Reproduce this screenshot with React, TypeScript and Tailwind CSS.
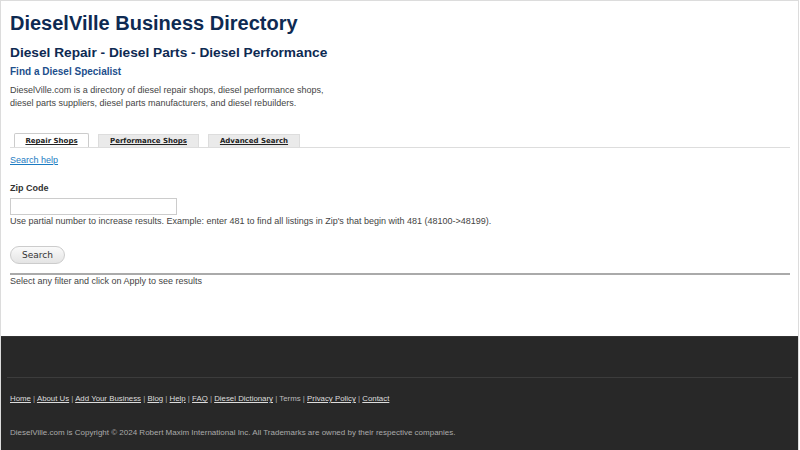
export default function App() {
	const links = [
		"Home",
		"About Us",
		"Add Your Business",
		"Blog",
		"Help",
		"FAQ",
		"Diesel Dictionary",
		"Terms",
		"Privacy Policy",
		"Contact",
	];

	const tab = "h-[13px] text-center text-[7px] leading-[13px] font-bold underline text-[#222] font-['DejaVu_Sans',Verdana,sans-serif] border border-b-0";

	return (
		<div className="w-[800px] h-[450px] overflow-hidden bg-white font-['Liberation_Sans',Arial,sans-serif]">
			<div className="w-[799px] h-full flex flex-col border-l border-t border-r border-[#dcdcdc]">
				{/* main */}
				<main className="h-[335px] px-[9px] pr-[8px]">
					<h1 className="mt-[10px] text-[20px] leading-[24px] font-bold text-[#0e2a52]">
						DieselVille Business Directory
					</h1>
					<h2 className="mt-[9px] text-[13.7px] leading-[17px] font-bold text-[#0e2a52]">
						Diesel Repair - Diesel Parts - Diesel Performance
					</h2>
					<h3 className="mt-[4px] text-[10px] leading-[13px] font-bold text-[#1d4f8c]">
						Find a Diesel Specialist
					</h3>
					<p className="mt-[6px] text-[9px] leading-[13px] text-[#444]">
						DieselVille.com is a directory of diesel repair shops, diesel performance shops,
						<br />
						diesel parts suppliers, diesel parts manufacturers, and diesel rebuilders.
					</p>

					{/* tabs */}
					<div className="mt-[24px] flex items-end gap-[9px] pl-[4px] border-b border-[#ddd] h-[14px]">
						<span className={`${tab} w-[75px] h-[14px] leading-[14px] bg-white border-[#ccc] rounded-t-[2px]`}>
							Repair Shops
						</span>
						<span className={`${tab} w-[101px] bg-[#eaeaea] border-[#ddd]`}>Performance Shops</span>
						<span className={`${tab} w-[92px] bg-[#eaeaea] border-[#ddd]`}>Advanced Search</span>
					</div>

					<a href="#" className="block w-fit mt-[6px] text-[9px] leading-[13px] text-[#1b7bc2] underline">
						Search help
					</a>

					<div className="mt-[15px] text-[9px] leading-[13px] font-bold text-[#333]">Zip Code</div>
					<input
						type="text"
						className="block mt-[3px] w-[167px] h-[17px] border border-[#ccc] bg-white"
					/>
					<p className="text-[9px] leading-[13px] text-[#444]">
						Use partial number to increase results. Example: enter 481 to find all listings in Zip's that begin
						with 481 (48100-&gt;48199).
					</p>

					<button className="block mt-[18px] w-[55px] h-[18px] rounded-full border border-[#ccc] bg-gradient-to-b from-[#fafafa] to-[#e4e4e4] text-[9px] leading-[16px] text-[#333] font-['DejaVu_Sans',Verdana,sans-serif]">
						Search
					</button>

					<div className="mt-[9px] h-[2px] bg-[#aaa]" />
					<p className="text-[9px] leading-[13px] text-[#444]">
						Select any filter and click on Apply to see results
					</p>
				</main>

				{/* footer */}
				<footer className="flex-1 bg-[#282828] border-t border-[#333] px-[6px] pt-[40px]">
					<div className="h-px bg-[#3c3c3c]" />
					<div className="mt-[15px] px-[3px] text-[7.85px] leading-[12px] text-[#aaa]">
						{links.map((l, i) => (
							<span key={l}>
								{l === "Terms" ? (
									<span className="text-[#bbb]">{l}</span>
								) : (
									<a href="#" className="underline text-[#ddd]">
										{l}
									</a>
								)}
								{i < links.length - 1 && " | "}
							</span>
						))}
					</div>
					<p className="mt-[22px] px-[3px] text-[8px] leading-[12px] text-[#aaa]">
						DieselVille.com is Copyright © 2024 Robert Maxim International Inc. All Trademarks are owned by their
						respective companies.
					</p>
				</footer>
			</div>
		</div>
	);
}
